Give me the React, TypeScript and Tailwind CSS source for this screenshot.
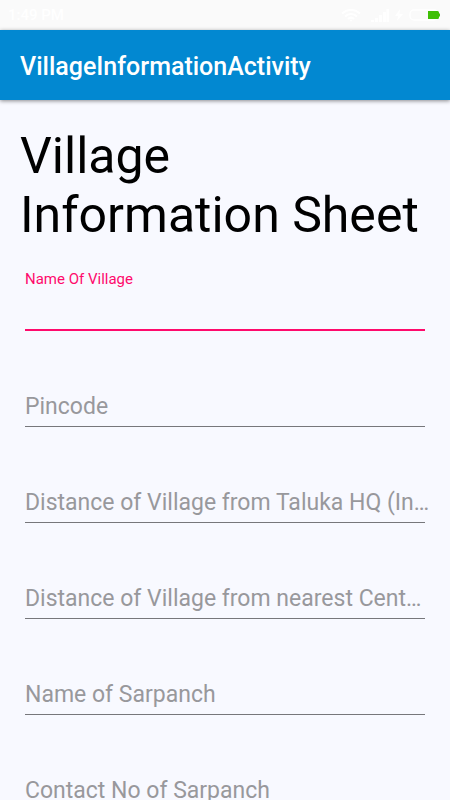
import { useState } from 'react';

interface Field {
  id: string;
  label: string;
  type: 'text' | 'tel';
}

const fields: Field[] = [
  { id: 'village', label: 'Name Of Village', type: 'text' },
  { id: 'pincode', label: 'Pincode', type: 'tel' },
  { id: 'talukaDistance', label: 'Distance of Village from Taluka HQ (In…', type: 'text' },
  { id: 'centreDistance', label: 'Distance of Village from nearest Cent…', type: 'text' },
  { id: 'sarpanch', label: 'Name of Sarpanch', type: 'text' },
  { id: 'sarpanchContact', label: 'Contact No of Sarpanch', type: 'tel' },
];

function StatusBar() {
  return (
    <div className="flex h-[30px] shrink-0 items-center justify-between bg-[#fafafa] px-2 text-white">
      <span className="text-[15px] leading-5 font-medium">1:49 PM</span>
      <div className="flex items-center gap-1.5">
        {/* wifi */}
        <svg className="mr-1" width="20" height="14" viewBox="0 0 20 14" fill="none" stroke="currentColor" strokeWidth="2">
          <path d="M1 5.5a13 13 0 0 1 18 0M4 8.5a8.5 8.5 0 0 1 12 0M7 11a4.5 4.5 0 0 1 6 0" />
          <circle cx="10" cy="12.5" r="1" fill="currentColor" stroke="none" />
        </svg>
        {/* signal */}
        <svg width="18" height="13" viewBox="0 0 18 13" fill="currentColor">
          <path d="M0 11h3v2H0zM4 9h3v4H4zM8 6h3v7H8zM12 3h3v10h-3zM15.5 0h2.500v13h-2.500z" />
        </svg>
        {/* charging */}
        <svg width="8" height="12" viewBox="0 0 8 12" fill="currentColor">
          <path d="M5 0 0 7h3l-1 5 6-7H4.500z" />
        </svg>
        {/* battery */}
        <svg width="33" height="12" viewBox="0 0 33 12">
          <rect x="1" y="1" width="28" height="10" rx="4" fill="none" stroke="currentColor" strokeWidth="1.500" />
          <path d="M19 2h9.500a1.500 1.500 0 0 1 1.500 1.500V4.500h1v3h-1v1a1.500 1.500 0 0 1-1.500 1.500H19z" fill="#3fbf06" />
        </svg>
      </div>
    </div>
  );
}

export default function App() {
  const [activeField, setActiveField] = useState('village');
  const [values, setValues] = useState<Record<string, string>>({});

  return (
    <div className="flex h-screen flex-col overflow-hidden bg-[#f8f9ff] font-['Roboto',sans-serif]">
      <StatusBar />

      <header className="z-10 flex h-[70px] shrink-0 items-center bg-[#0288d1] px-5 pt-1 shadow-[0_1px_4px_rgba(0,0,0,0.45)]">
        <span className="text-[25px] leading-8 font-medium text-white">VillageInformationActivity</span>
      </header>

      <main className="flex-1 overflow-y-auto px-5 pt-[27px] [scrollbar-width:none]">
        <h1 className="text-[50px] leading-[59px] font-normal text-black">Village Information Sheet</h1>

        <form className="flex flex-col px-[5px] pb-8">
          {fields.map((field) => {
            const active = activeField === field.id;
            const floating = active || Boolean(values[field.id]);

            return (
              <div key={field.id} className="relative flex h-24 shrink-0 flex-col justify-end first:h-[86px]">
                <label
                  htmlFor={field.id}
                  className={`pointer-events-none absolute left-0 whitespace-nowrap ${
                    floating ? 'bottom-[42px] text-[15px] leading-5' : 'bottom-[5px] text-[23px] leading-[30px]'
                  } ${active ? 'text-[#ff0a6c]' : 'text-[#98989c]'}`}
                >
                  {field.label}
                </label>
                <input
                  id={field.id}
                  type={field.type}
                  value={values[field.id] ?? ''}
                  onFocus={() => setActiveField(field.id)}
                  onChange={(e) => setValues({ ...values, [field.id]: e.target.value })}
                  className={`h-9 w-full bg-transparent text-[23px] text-black outline-none ${
                    active ? 'border-b-2 border-[#ff0a6c]' : 'border-b border-[#77777b]'
                  }`}
                />
              </div>
            );
          })}
        </form>
      </main>
    </div>
  );
}
